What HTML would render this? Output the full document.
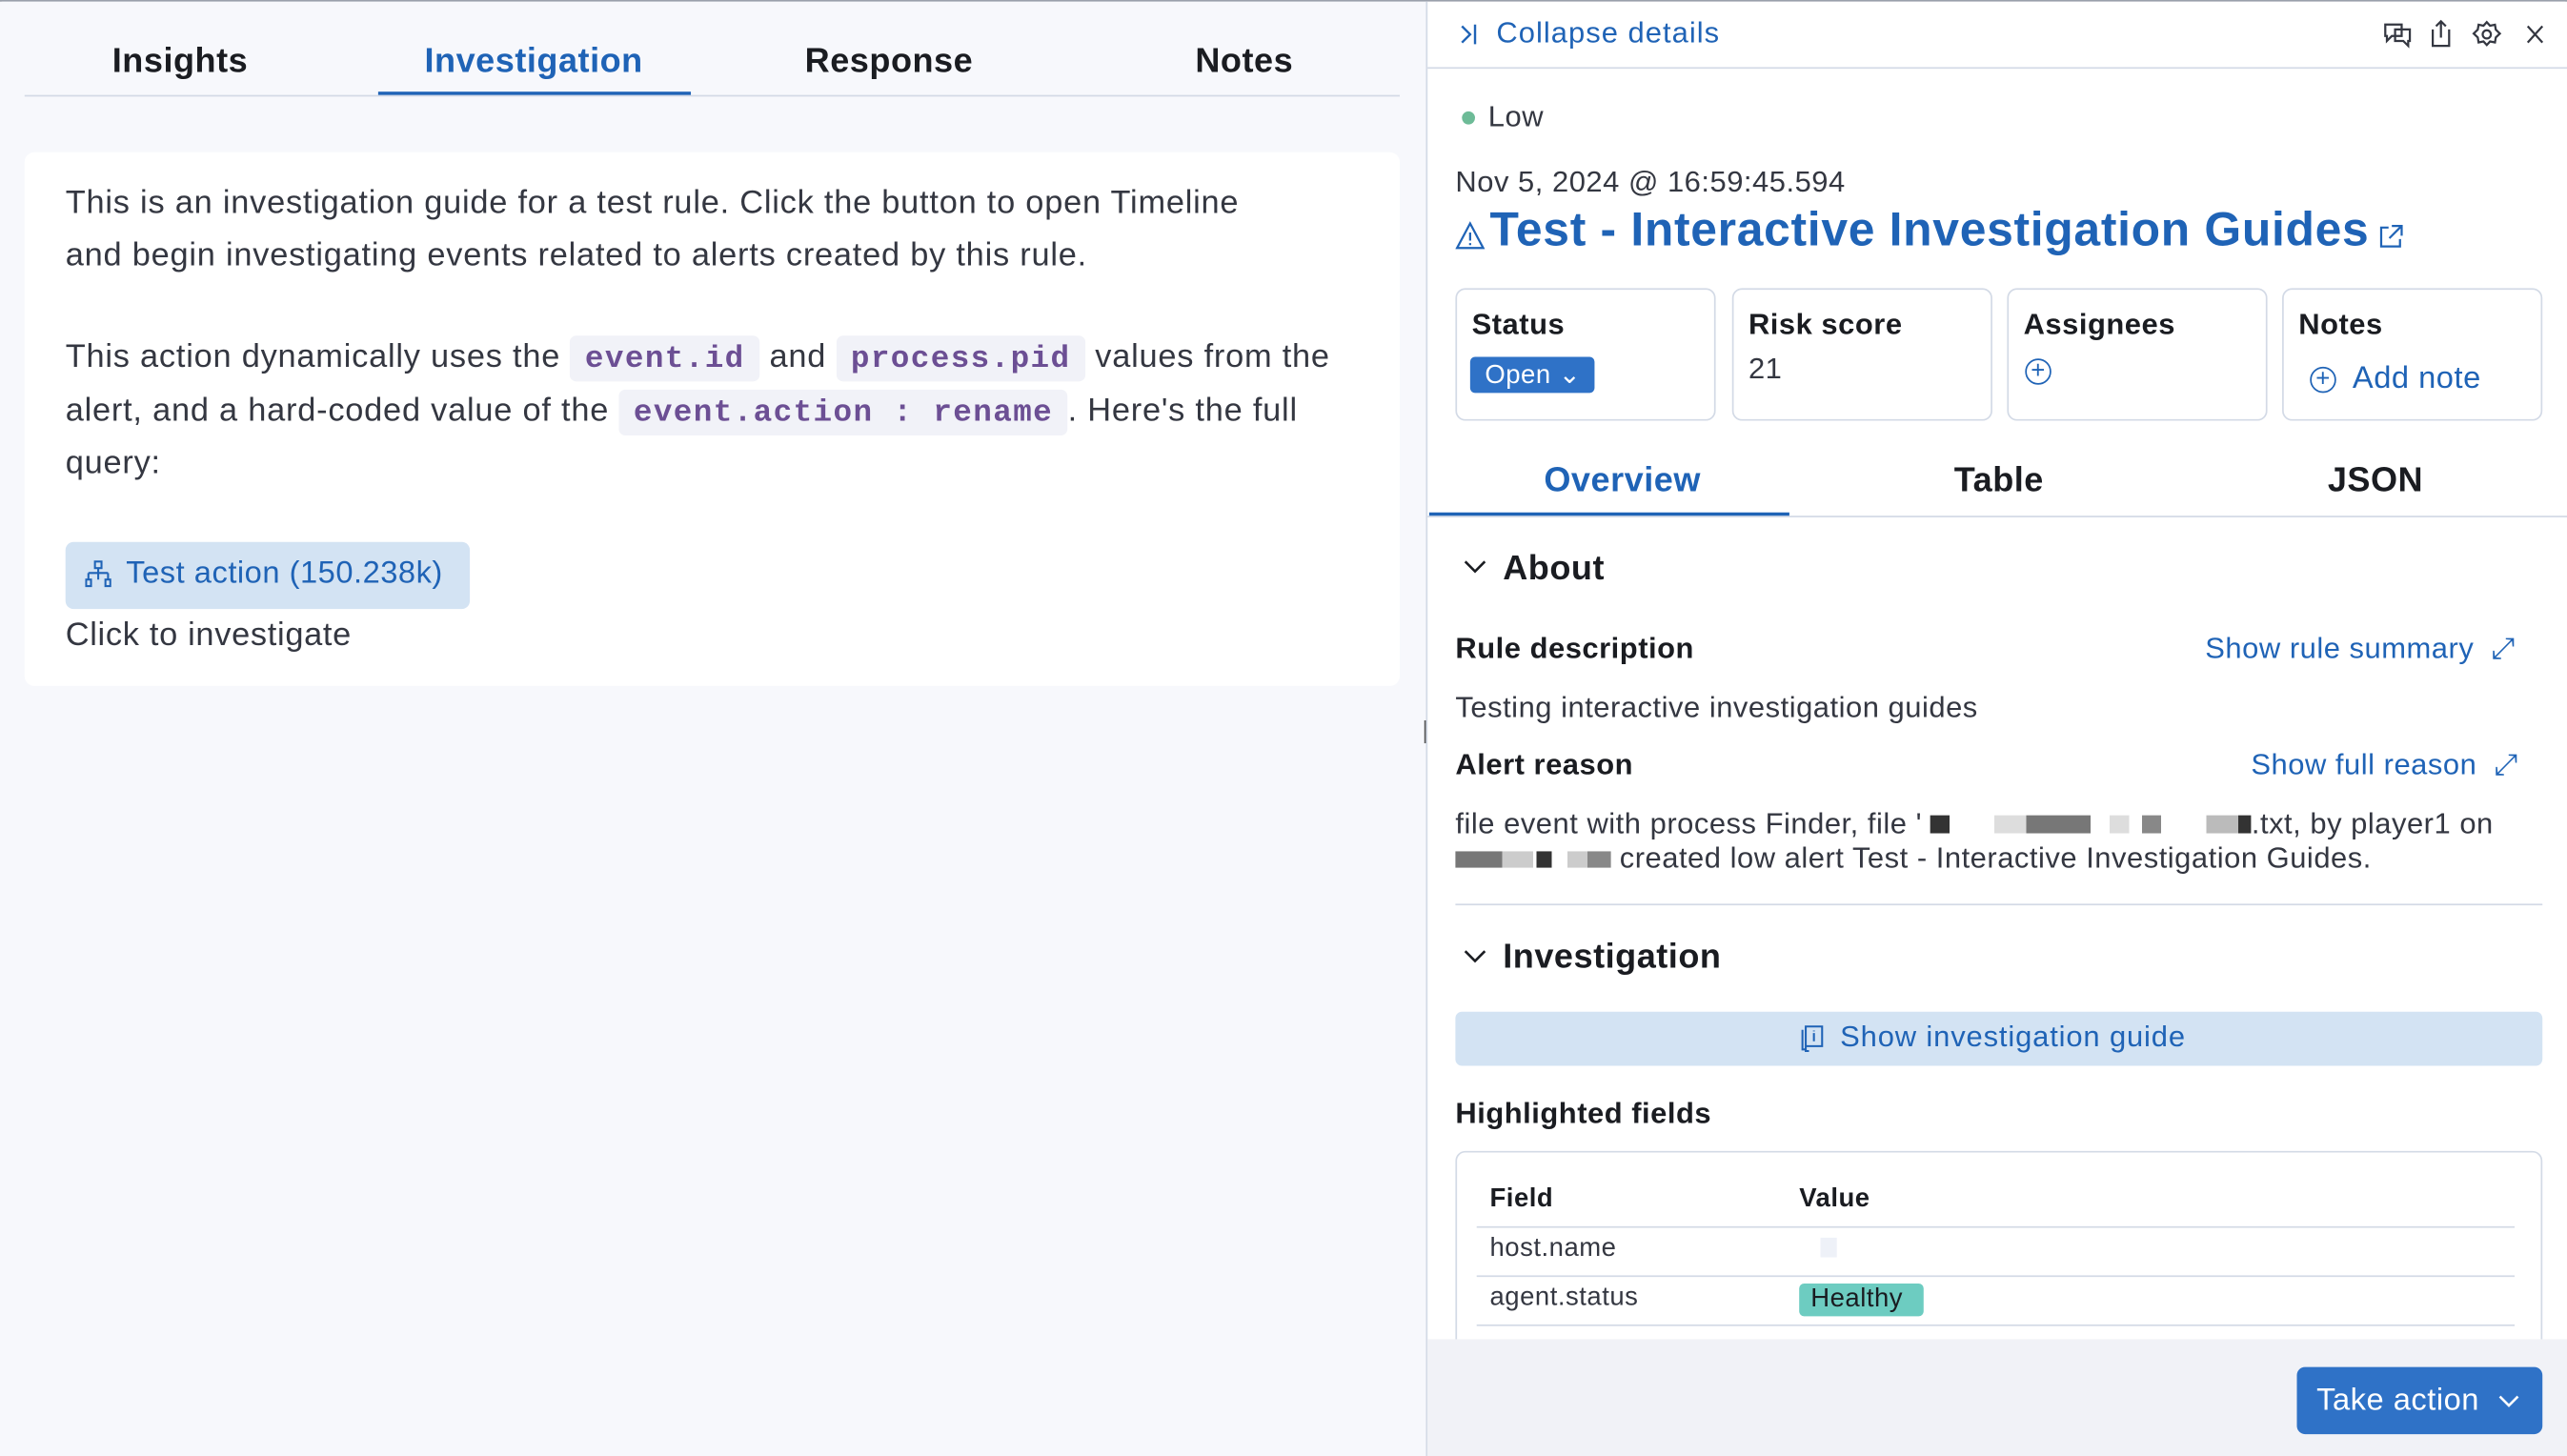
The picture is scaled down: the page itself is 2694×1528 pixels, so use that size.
<!DOCTYPE html>
<html><head><meta charset="utf-8"><style>
*{box-sizing:border-box;margin:0;padding:0}
html,body{width:2694px;height:1528px;overflow:hidden;background:#fff}
#w{width:1568px;height:889px;transform:scale(1.71811);transform-origin:0 0;position:relative;font-family:"Liberation Sans",sans-serif;color:#1a1c21;border:1px solid #9aa0ab;letter-spacing:0.3px}
.a{position:absolute;white-space:nowrap}
#L{position:absolute;left:-1px;top:0;width:872px;height:889px;background:#f7f8fc}
#R{position:absolute;left:870px;top:0;width:698px;height:889px;background:#fff;border-left:1px solid #d3dae6}
.tab{font-weight:bold;font-size:21px;transform:translateX(-50%);top:25px}
.blue{color:#1f63b6}
.card{position:absolute;left:15px;top:92px;width:840px;height:326px;background:#fff;border-radius:6px}
.p{position:absolute;left:25px;font-size:20px;line-height:31.5px;color:#343741;white-space:nowrap;letter-spacing:0.45px}
code{font-family:"Liberation Mono",monospace;font-weight:bold;color:#6c4f94;background:#f1f2f8;padding:3px 9px;border-radius:4px;font-size:19px;letter-spacing:0.8px}
.box{position:absolute;top:175px;width:159px;height:81px;border:1px solid #d3dae6;border-radius:6px}
.box b{position:absolute;left:9px;top:11px;font-size:18px}
.h{font-weight:bold;font-size:18px}
.t{font-size:18px;color:#343741}
.line{position:absolute;height:1px;background:#d3dae6}
</style></head><body><div id="w">
<div id="L">
 <div class="a tab" style="left:110px">Insights</div>
 <div class="a tab blue" style="left:326px">Investigation</div>
 <div class="a tab" style="left:543px">Response</div>
 <div class="a tab" style="left:760px">Notes</div>
 <div class="line" style="left:15px;top:57px;width:840px"></div>
 <div style="position:absolute;left:231px;top:55px;width:191px;height:2px;background:#1f63b6"></div>
 <div class="card">
  <div class="p" style="top:16px">This is an investigation guide for a test rule. Click the button to open Timeline<br>and begin investigating events related to alerts created by this rule.</div>
  <div class="p" style="top:110px">This action dynamically uses the <code>event.id</code> and <code>process.pid</code> values from the<br>alert, and a hard-coded value of the <code>event.action : rename</code>. Here's the full<br>query:</div>
  <div style="position:absolute;left:25px;top:238px;width:247px;height:41px;background:#d3e3f3;border-radius:5px"></div>
  <svg class="a" style="left:37px;top:249px" width="16" height="18" viewBox="0 0 16 18" fill="none" stroke="#1f63b6" stroke-width="1.2"><rect x="6" y="1" width="4" height="4"/><path d="M8 5v3M2 8h12M2 8v4M8 8v4M14 8v4"/><rect x="0.6" y="12" width="3" height="4"/><rect x="12.4" y="12" width="3" height="4"/></svg>
  <div class="a blue" style="left:62px;top:247px;font-size:19px">Test action (150.238k)</div>
  <div class="a" style="left:25px;top:284px;font-size:20px;color:#343741;letter-spacing:0.4px">Click to investigate</div>
 </div>
 <div class="a" style="left:870px;top:439px;width:4px;height:14px;border-left:1px solid #555;border-right:1px solid #555"></div>
</div>
<div id="R">
 <svg class="a" style="left:19px;top:13px" width="12" height="14" viewBox="0 0 12 14" fill="none" stroke="#1f63b6" stroke-width="1.4"><path d="M2 2l5 5-5 5M10 1v12"/></svg>
 <div class="a blue" style="left:42px;top:9px;font-size:18px;letter-spacing:0.6px">Collapse details</div>
 <svg class="a" style="left:584px;top:11px" width="100" height="18" viewBox="0 0 100 18" fill="none" stroke="#343741" stroke-width="1.3"><path d="M1 3h10v7H5l-3 3V10H1z M7 6h9v7h-1v3l-3-3H7z"/><path d="M30 6v10h10V6M35 1v10M32 4l3-3 3 3"/><circle cx="63" cy="9" r="2.5"/><path d="M63 1.5l2 2.2 3-.6.5 3 2.5 2.4-2.5 2.4-.5 3-3-.6-2 2.2-2-2.2-3 .6-.5-3-2.5-2.4 2.5-2.4.5-3 3 .6z"/><path d="M88 4l9 10M97 4l-9 10"/></svg>
 <div class="line" style="left:0;top:40px;width:698px"></div>
 <div class="a" style="left:21px;top:67px;width:8px;height:8px;border-radius:50%;background:#6dbb97"></div>
 <div class="a t" style="left:37px;top:60px">Low</div>
 <div class="a t" style="left:17px;top:100px">Nov 5, 2024 @ 16:59:45.594</div>
 <svg class="a" style="left:17px;top:134px" width="18" height="18" viewBox="0 0 18 18" fill="none" stroke="#1f63b6" stroke-width="1.3"><path d="M9 1.5L1 16.5h16z M9 7v5M9 13.5v1.2"/></svg>
 <div class="a blue" style="left:38px;top:124px;font-size:29px;font-weight:bold;letter-spacing:0.4px">Test - Interactive Investigation Guides</div>
 <svg class="a" style="left:581px;top:136px" width="15" height="15" viewBox="0 0 15 15" fill="none" stroke="#1f63b6" stroke-width="1.3"><path d="M6 2H1.5v11.5H13V9M8 1h6v6M14 1L6.5 8.5"/></svg>
 <div class="box" style="left:17px"><b>Status</b><div class="a" style="left:8px;top:41px;width:76px;height:22px;background:#2f72c7;border-radius:3px;color:#fff;font-size:16px;padding:1px 0 0 9px">Open &#8964;</div></div>
 <div class="box" style="left:186px"><b>Risk score</b><div class="a t" style="left:9px;top:38px">21</div></div>
 <div class="box" style="left:354px"><b>Assignees</b><div class="a" style="left:10px;top:42px;width:16px;height:16px;border:1.3px solid #1f63b6;border-radius:50%;color:#1f63b6;font-size:15px;line-height:13px;text-align:center">+</div></div>
 <div class="box" style="left:522px"><b>Notes</b><div class="a" style="left:16px;top:47px;width:16px;height:16px;border:1.3px solid #1f63b6;border-radius:50%;color:#1f63b6;font-size:15px;line-height:13px;text-align:center">+</div><div class="a blue" style="left:42px;top:44px;font-size:19px">Add note</div></div>
 <div class="a tab blue" style="left:119px;top:281px">Overview</div>
 <div class="a tab" style="left:349px;top:281px">Table</div>
 <div class="a tab" style="left:579px;top:281px">JSON</div>
 <div class="line" style="left:0;top:314px;width:698px"></div>
 <div style="position:absolute;left:1px;top:312px;width:220px;height:2px;background:#1f63b6"></div>
 <svg class="a" style="left:22px;top:341px" width="14" height="9" viewBox="0 0 14 9" fill="none" stroke="#1a1c21" stroke-width="1.5"><path d="M1 1l6 6 6-6"/></svg>
 <div class="a" style="left:46px;top:335px;font-size:21px;font-weight:bold">About</div>
 <div class="a h" style="left:17px;top:385px">Rule description</div>
 <div class="a blue" style="left:475px;top:385px;font-size:18px">Show rule summary &nbsp;&#10530;</div>
 <div class="a t" style="left:17px;top:421px">Testing interactive investigation guides</div>
 <div class="a h" style="left:17px;top:456px">Alert reason</div>
 <div class="a blue" style="left:503px;top:456px;font-size:18px">Show full reason &nbsp;&#10530;</div>
 <div class="a t" style="left:17px;top:492px;line-height:21px">file event with process Finder, file ' <span style="display:inline-block;width:196px;height:11px;background:linear-gradient(90deg,#333 0 6%,#fff 6% 20%,#ddd 20% 30%,#777 30% 50%,#fff 50% 56%,#ddd 56% 62%,#fff 62% 66%,#888 66% 72%,#fff 72% 86%,#bbb 86% 96%,#333 96%)"></span>.txt, by player1 on<br><span style="display:inline-block;width:95px;height:10px;background:linear-gradient(90deg,#777 0 30%,#ccc 30% 50%,#fff 50% 52%,#333 52% 62%,#fff 62% 72%,#ccc 72% 85%,#888 85%)"></span> created low alert Test - Interactive Investigation Guides.</div>
 <div class="line" style="left:17px;top:551px;width:664px"></div>
 <svg class="a" style="left:22px;top:579px" width="14" height="9" viewBox="0 0 14 9" fill="none" stroke="#1a1c21" stroke-width="1.5"><path d="M1 1l6 6 6-6"/></svg>
 <div class="a" style="left:46px;top:572px;font-size:21px;font-weight:bold">Investigation</div>
 <div style="position:absolute;left:17px;top:617px;width:664px;height:33px;background:#d3e3f3;border-radius:4px"></div>
 <svg class="a" style="left:228px;top:625px" width="14" height="17" viewBox="0 0 14 17" fill="none" stroke="#1f63b6" stroke-width="1.2"><path d="M3 1h10v12H3zM3 13v3h2M1 3v12h2M8 5v5M8 3.5v.5"/></svg>
 <div class="a blue" style="left:252px;top:622px;font-size:18px;letter-spacing:0.5px">Show investigation guide</div>
 <div class="a h" style="left:17px;top:669px">Highlighted fields</div>
 <div style="position:absolute;left:17px;top:702px;width:664px;height:130px;border:1px solid #d3dae6;border-radius:6px"></div>
 <div class="a" style="left:38px;top:723px;font-size:16px;font-weight:bold">Field</div>
 <div class="a" style="left:227px;top:723px;font-size:16px;font-weight:bold">Value</div>
 <div class="line" style="left:30px;top:748px;width:634px"></div>
 <div class="a" style="left:38px;top:753px;font-size:16px;color:#343741">host.name</div>
 <div class="a" style="left:240px;top:755px;width:10px;height:12px;background:#eef1f8"></div>
 <div class="line" style="left:30px;top:778px;width:634px"></div>
 <div class="a" style="left:38px;top:783px;font-size:16px;color:#343741">agent.status</div>
 <div class="a" style="left:227px;top:783px;width:76px;height:20px;background:#6dccc1;border-radius:3px;font-size:16px;padding:1px 0 0 7px">Healthy</div>
 <div class="line" style="left:30px;top:808px;width:634px"></div>
 <div style="position:absolute;left:0;top:817px;width:698px;height:72px;background:#f1f2f7"></div>
 <div class="a" style="left:531px;top:834px;width:150px;height:41px;background:#2f72c7;border-radius:5px;color:#fff;font-size:19px;padding:10px 0 0 12px">Take action</div>
 <svg class="a" style="left:654px;top:851px" width="13" height="8" viewBox="0 0 13 8" fill="none" stroke="#fff" stroke-width="1.5"><path d="M1 1l5.5 5.5L12 1"/></svg>
</div>
</div></body></html>
